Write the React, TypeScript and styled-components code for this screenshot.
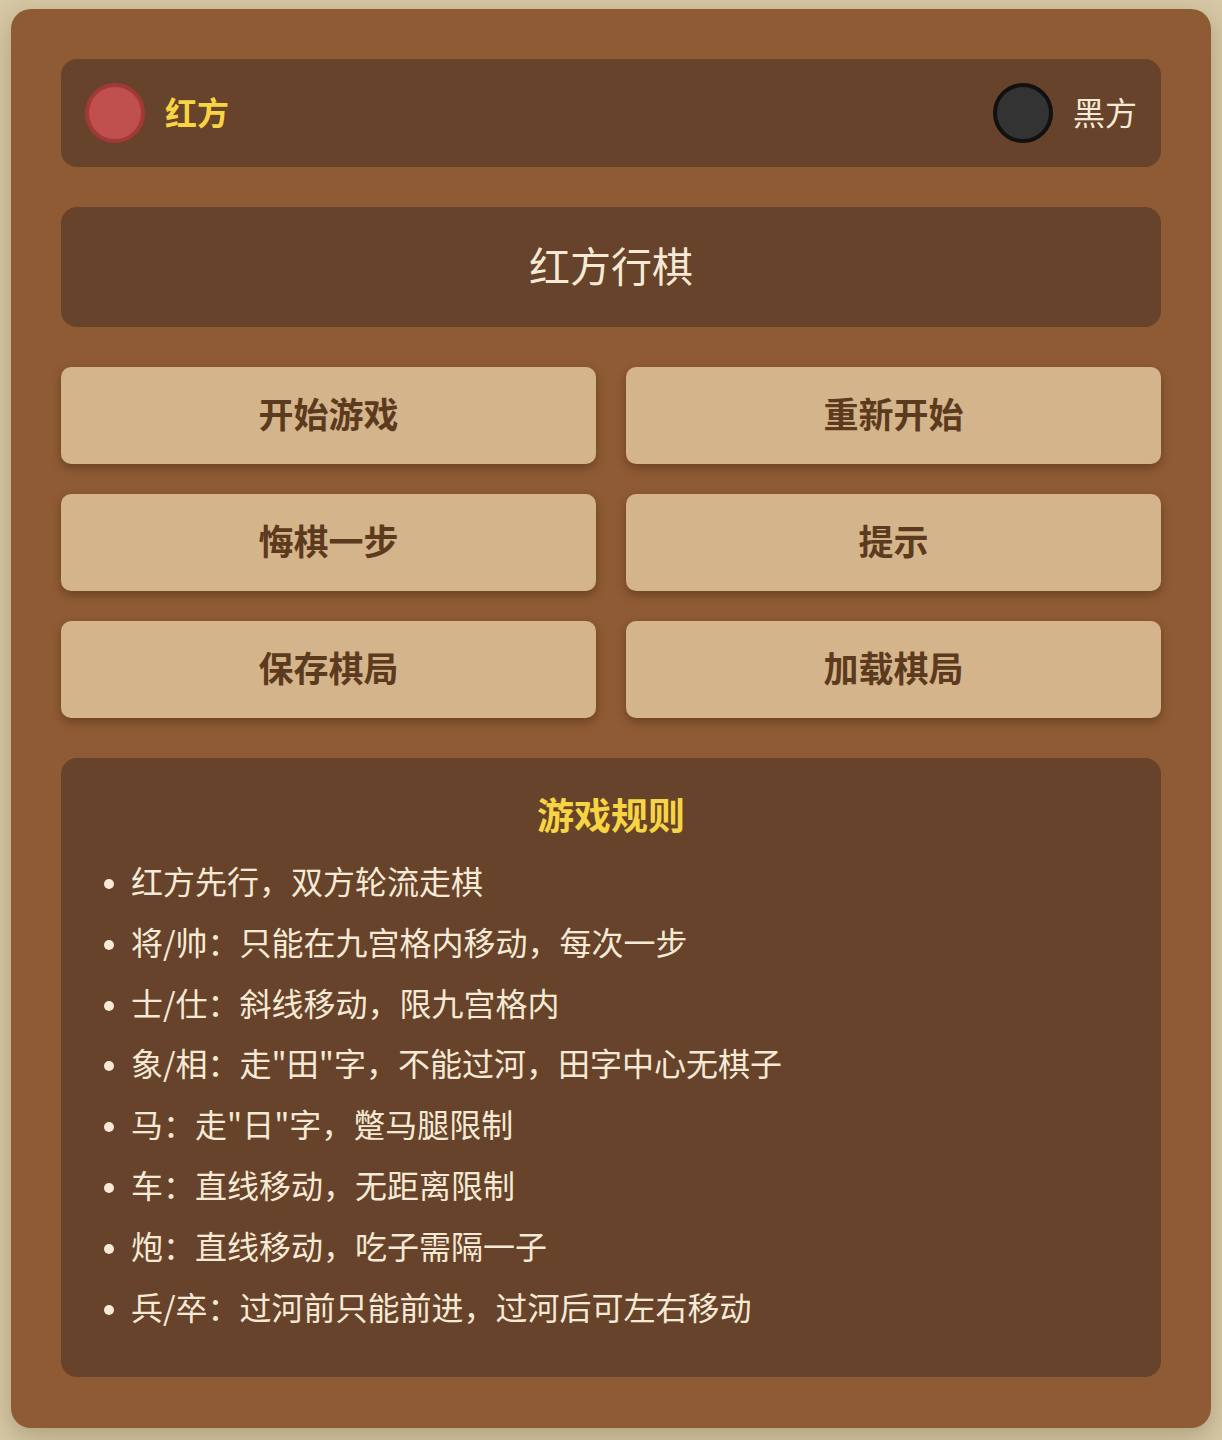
import React from "react";
import styled, { createGlobalStyle } from "styled-components";

const Global = createGlobalStyle`
  html, body { margin: 0; padding: 0; }
  body {
    background: #d6c8a4;
    font-family: "Noto Sans CJK SC", "Noto Sans", sans-serif;
  }
`;

const Page = styled.div`
  min-height: 1440px;
  padding-top: 9px;
  display: flex;
  align-items: flex-start;
  justify-content: center;
  box-sizing: border-box;
`;

const Panel = styled.div`
  width: 1200px;
  box-sizing: border-box;
  background: #8f5b34;
  border-radius: 20px;
  padding: 50px 50px 51px;
  box-shadow: 0 8px 24px rgba(60, 40, 10, 0.25);
  display: flex;
  flex-direction: column;
  gap: 40px;
`;

const PlayerBar = styled.div`
  background: #66432a;
  border-radius: 16px;
  height: 108px;
  padding: 0 24px;
  display: flex;
  align-items: center;
  justify-content: space-between;
`;

const Player = styled.div`
  display: flex;
  align-items: center;
  gap: 20px;
`;

const Stone = styled.div<{ $fill: string; $ring: string }>`
  width: 60px;
  height: 60px;
  box-sizing: border-box;
  border-radius: 50%;
  background: ${(p) => p.$fill};
  border: 4px solid ${(p) => p.$ring};
`;

const PlayerName = styled.span<{ $active?: boolean }>`
  font-size: 32px;
  font-weight: ${(p) => (p.$active ? 700 : 400)};
  color: ${(p) => (p.$active ? "#f7d443" : "#f6ead6")};
  line-height: 1;
  padding-bottom: 4px;
`;

const Status = styled.div`
  background: #66432a;
  border-radius: 16px;
  height: 120px;
  box-sizing: border-box;
  padding-bottom: 6px;
  display: flex;
  align-items: center;
  justify-content: center;
  font-size: 41px;
  color: #f6ead6;
`;

const ButtonGrid = styled.div`
  display: grid;
  grid-template-columns: 1fr 1fr;
  column-gap: 30px;
  row-gap: 30px;
`;

const Btn = styled.button`
  height: 97px;
  border: none;
  border-radius: 10px;
  background: #d4b48a;
  color: #5c3a1e;
  font-family: inherit;
  font-size: 35px;
  font-weight: 700;
  padding: 0 0 6px;
  box-shadow: 0 4px 10px rgba(40, 20, 5, 0.35);
  cursor: pointer;
`;

const Rules = styled.div`
  background: #66432a;
  border-radius: 16px;
  padding: 31px 40px 35px;
`;

const RulesTitle = styled.h2`
  margin: 0 0 14px;
  text-align: center;
  font-size: 37px;
  font-weight: 700;
  color: #f7d443;
  line-height: 1.4;
`;

const RuleList = styled.ul`
  margin: 0;
  padding-left: 30px;
  list-style: disc;
  color: #f6ead6;
  font-size: 32px;
  line-height: 1.6;
`;

const Rule = styled.li`
  margin-bottom: 9.7px;
  &::marker { font-size: 26px; }
`;

const buttons = ["开始游戏", "重新开始", "悔棋一步", "提示", "保存棋局", "加载棋局"];
const rules = [
  "红方先行，双方轮流走棋",
  "将/帅：只能在九宫格内移动，每次一步",
  "士/仕：斜线移动，限九宫格内",
  "象/相：走\"田\"字，不能过河，田字中心无棋子",
  "马：走\"日\"字，蹩马腿限制",
  "车：直线移动，无距离限制",
  "炮：直线移动，吃子需隔一子",
  "兵/卒：过河前只能前进，过河后可左右移动",
];

export default function App() {
  return (
    <>
      <Global />
      <Page>
        <Panel>
          <PlayerBar>
            <Player>
              <Stone $fill="#c0504d" $ring="#a13a36" />
              <PlayerName $active>红方</PlayerName>
            </Player>
            <Player>
              <Stone $fill="#333333" $ring="#111111" />
              <PlayerName>黑方</PlayerName>
            </Player>
          </PlayerBar>
          <Status>红方行棋</Status>
          <ButtonGrid>
            {buttons.map((b) => (
              <Btn key={b}>{b}</Btn>
            ))}
          </ButtonGrid>
          <Rules>
            <RulesTitle>游戏规则</RulesTitle>
            <RuleList>
              {rules.map((r) => (
                <Rule key={r}>{r}</Rule>
              ))}
            </RuleList>
          </Rules>
        </Panel>
      </Page>
    </>
  );
}
